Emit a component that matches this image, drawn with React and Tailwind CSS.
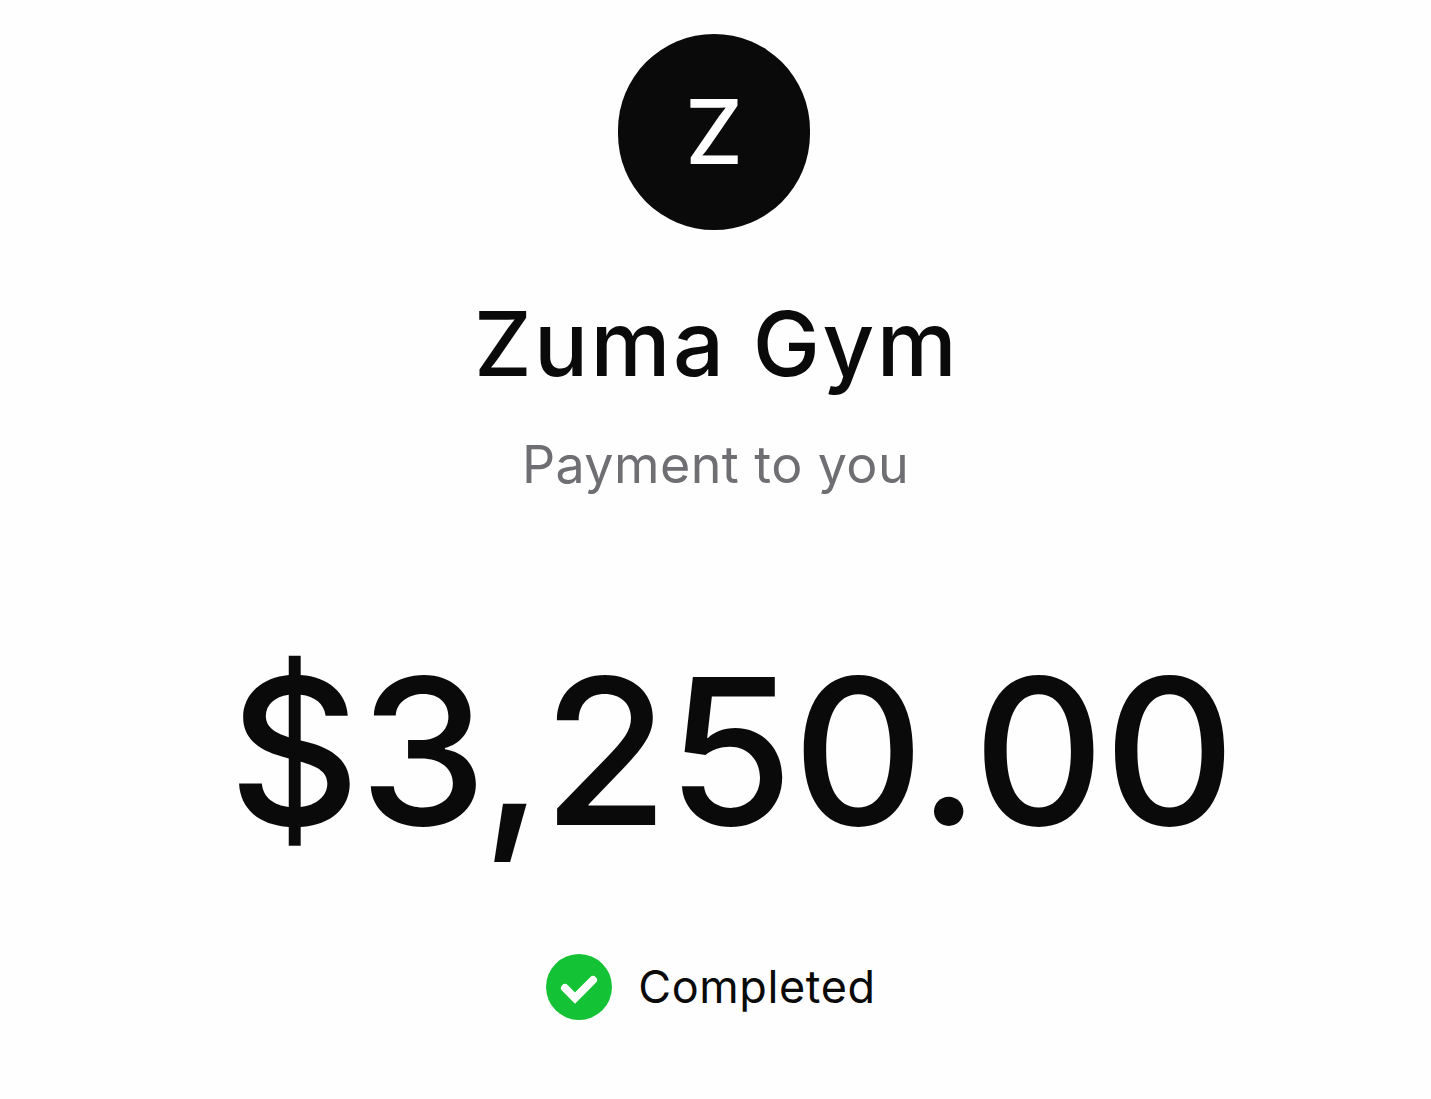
export default function App() {
  return (
    <div className="w-[1431px] h-[1099px] bg-[#fefefe] flex flex-col items-center overflow-hidden font-['Inter',sans-serif] text-[#0a0a0a]">
      <div className="mt-[34px] mr-[3px] w-[192px] h-[196px] rounded-full bg-[#0a0a0a] flex items-center justify-center text-white text-[90px] leading-none font-[550]">Z</div>
      <div className="mt-[59px] ml-[2px] text-[90px] leading-[110px] font-[550] tracking-[2.4px]">Zuma Gym</div>
      <div className="mt-[34px] text-[52px] leading-[64px] tracking-[0.4px] text-[#6e6e73]">Payment to you</div>
      <div className="mt-[126px] ml-[32px] text-[204px] leading-[256px] font-medium tracking-[-1px] font-['Inter',sans-serif]">$3,250.00</div>
      <div className="mt-[75px] mr-[9px] flex items-center gap-[26px]">
        <svg width="66" height="66" viewBox="0 0 66 66"><circle cx="33" cy="33" r="33" fill="#14c335"/><path d="M19 34l10 10 18-18" fill="none" stroke="#fff" strokeWidth="8" strokeLinecap="round"/></svg>
        <span className="text-[45px] leading-[56px] tracking-[0.6px]">Completed</span>
      </div>
    </div>
  );
}
